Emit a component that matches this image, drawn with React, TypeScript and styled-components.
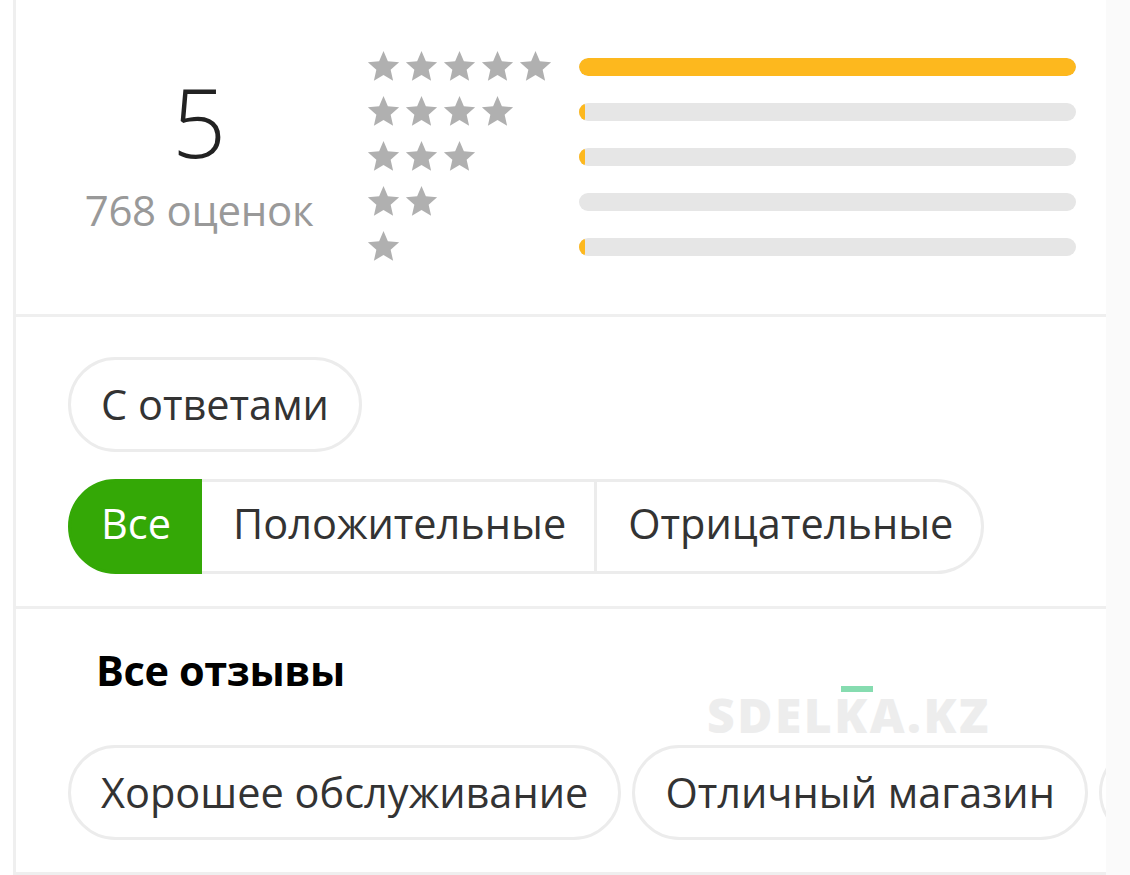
import React from "react";
import styled, { createGlobalStyle } from "styled-components";

const Global = createGlobalStyle`
  html, body { margin: 0; padding: 0; background: #ffffff; }
  body { font-family: "Open Sans", "Noto Sans", sans-serif; color: #333; }
  * { box-sizing: border-box; }
`;

const Page = styled.div`
  display: flex;
  height: 875px;
  padding-left: 13px;
  overflow: hidden;
`;

const Panel = styled.div`
  width: 1093px;
  flex-shrink: 0;
  border-left: 3px solid #efefef;
  display: flex;
  flex-direction: column;
  background: #fff;
  overflow: hidden;
`;

const Aside = styled.div`
  flex: 1;
  background: #fafafa;
`;

const Section = styled.section<{ $h: number }>`
  position: relative;
  height: ${(p) => p.$h}px;
  flex-shrink: 0;
  border-bottom: 3px solid #efefef;
`;

const Overview = styled(Section)`
  display: flex;
  align-items: flex-start;
  padding: 44px 30px 0 14px;
`;

const Summary = styled.div`
  width: 338px;
  margin-top: 30px;
  display: flex;
  flex-direction: column;
  align-items: center;
`;

const Score = styled.div`
  font-size: 95px;
  line-height: 95px;
  font-weight: 300;
  color: #222;
`;

const Count = styled.div`
  margin-top: 20px;
  font-size: 42px;
  line-height: 42px;
  color: #999;
  letter-spacing: -0.3px;
`;

const Distribution = styled.div`
  flex: 1;
  display: flex;
  flex-direction: column;
`;

const DistRow = styled.div`
  display: flex;
  align-items: center;
  height: 45px;
`;

const Stars = styled.div`
  width: 213px;
  flex-shrink: 0;
  display: flex;
  gap: 3px;
  margin-left: -2px;
`;

const Track = styled.div`
  flex: 1;
  height: 18px;
  border-radius: 9px;
  background: #e6e6e6;
  overflow: hidden;
`;

const Fill = styled.div`
  height: 100%;
  background: #fdb81e;
  border-radius: 9px;
`;

const Filters = styled(Section)`
  padding: 40px 0 0 52px;
  display: flex;
  flex-direction: column;
  align-items: flex-start;
  gap: 27px;
`;

const Pill = styled.div`
  height: 95px;
  padding: 0 30px 2px;
  border: 3px solid #ececec;
  border-radius: 48px;
  display: inline-flex;
  align-items: center;
  font-size: 41.5px;
  color: #333;
  white-space: nowrap;
  flex-shrink: 0;
`;

const GhostPill = styled.div`
  width: 300px;
  height: 95px;
  border: 3px solid #ececec;
  border-radius: 48px;
  flex-shrink: 0;
`;

const Segmented = styled.div`
  display: inline-flex;
  height: 95px;
`;

const Segment = styled.div<{ $active?: boolean; $first?: boolean; $last?: boolean }>`
  display: flex;
  align-items: center;
  padding: 0 28px 8px ${(p) => (p.$first ? "30px" : "31px")};
  font-size: 41.5px;
  white-space: nowrap;
  border: 3px solid ${(p) => (p.$active ? "#34a806" : "#ececec")};
  border-left-width: ${(p) => (p.$first ? "3px" : "0")};
  border-radius: ${(p) => (p.$first ? "48px 0 0 48px" : p.$last ? "0 48px 48px 0" : "0")};
  background: ${(p) => (p.$active ? "#34a806" : "#fff")};
  color: ${(p) => (p.$active ? "#fff" : "#333")};
`;

const Reviews = styled(Section)`
  padding: 41px 0 0 52px;
  display: flex;
  flex-direction: column;
`;

const Title = styled.h2`
  margin: 0 0 0 28px;
  font-size: 41.5px;
  line-height: 41px;
  font-weight: 700;
  color: #000;
  letter-spacing: -0.4px;
`;

const Tags = styled.div`
  margin-top: 54px;
  display: flex;
  gap: 11px;
`;

const Watermark = styled.div`
  position: absolute;
  left: 691px;
  top: 82px;
  font-size: 48px;
  line-height: 48px;
  font-weight: 800;
  letter-spacing: 2.5px;
  color: #ededed;
  pointer-events: none;
`;

const WatermarkDash = styled.div`
  position: absolute;
  left: 825px;
  top: 77px;
  width: 32px;
  height: 6px;
  background: #86dcb0;
`;

const Star = () => (
  <svg width="35" height="35" viewBox="0 0 24 24">
    <polygon
      fill="#b0b0b0"
      points="12,1.3 15,8.4 22.7,9.1 16.9,14.2 18.6,21.8 12,17.8 5.4,21.8 7.1,14.2 1.3,9.1 9,8.4"
    />
  </svg>
);

const distribution = [
  { stars: 5, pct: 100 },
  { stars: 4, pct: 1.2 },
  { stars: 3, pct: 1.2 },
  { stars: 2, pct: 0 },
  { stars: 1, pct: 1.2 },
];

export default function App() {
  return (
    <>
      <Global />
      <Page>
        <Panel>
          <Overview $h={317}>
            <Summary>
              <Score>5</Score>
              <Count>768 оценок</Count>
            </Summary>
            <Distribution>
              {distribution.map((d) => (
                <DistRow key={d.stars}>
                  <Stars>
                    {Array.from({ length: d.stars }).map((_, i) => (
                      <Star key={i} />
                    ))}
                  </Stars>
                  <Track>
                    <Fill style={{ width: `${d.pct}%` }} />
                  </Track>
                </DistRow>
              ))}
            </Distribution>
          </Overview>
          <Filters $h={292}>
            <Pill>С ответами</Pill>
            <Segmented>
              <Segment $active $first>Все</Segment>
              <Segment>Положительные</Segment>
              <Segment $last>Отрицательные</Segment>
            </Segmented>
          </Filters>
          <Reviews $h={266}>
            <Title>Все отзывы</Title>
            <WatermarkDash />
            <Watermark>SDELKA.KZ</Watermark>
            <Tags>
              <Pill>Хорошее обслуживание</Pill>
              <Pill>Отличный магазин</Pill>
              <GhostPill />
            </Tags>
          </Reviews>
        </Panel>
        <Aside />
      </Page>
    </>
  );
}
